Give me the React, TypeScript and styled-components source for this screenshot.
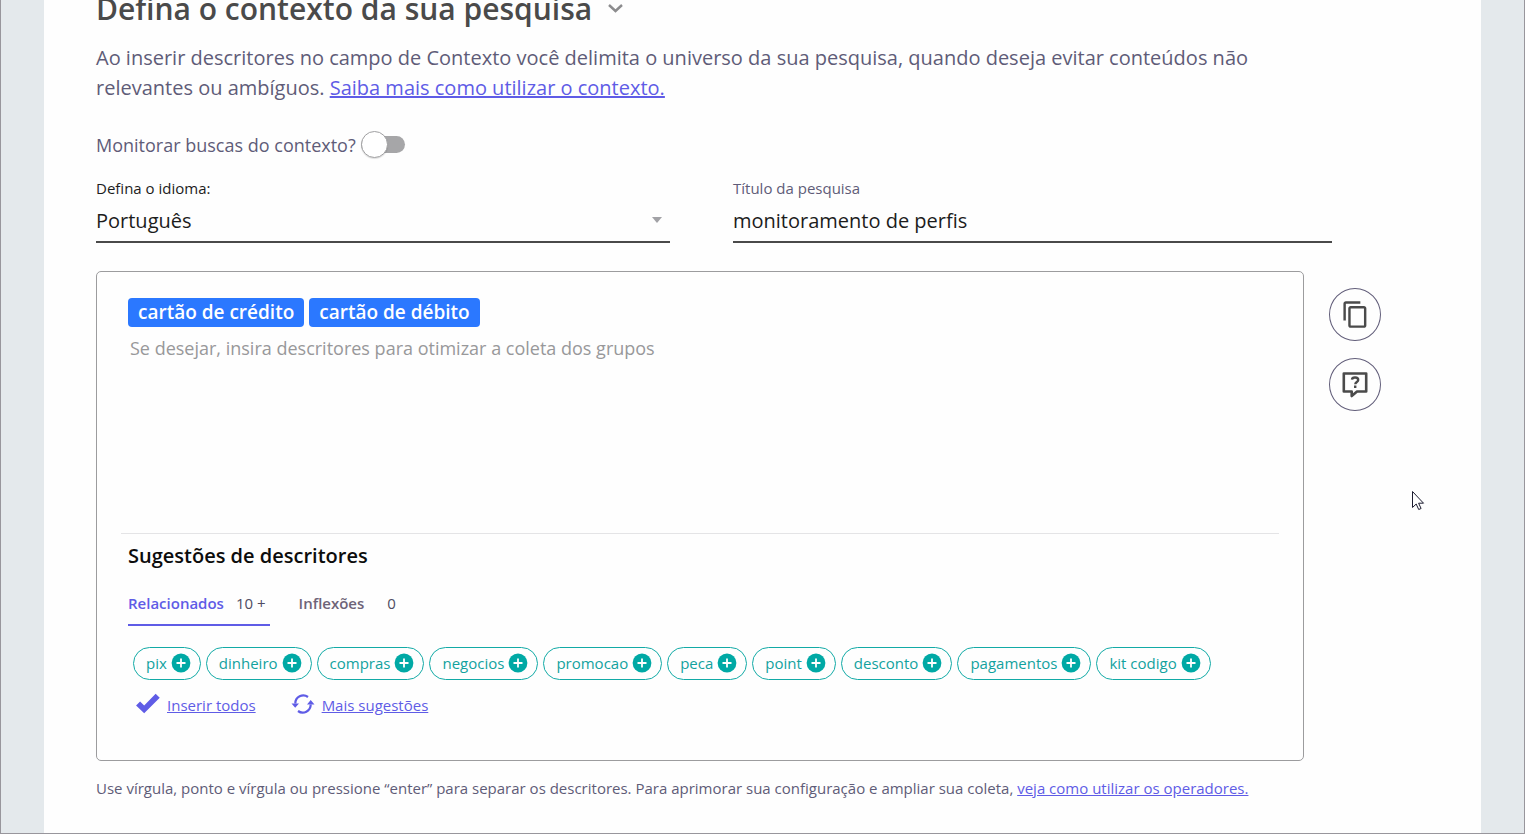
import React, { useState } from 'react';
import styled, { createGlobalStyle } from 'styled-components';

const GlobalStyle = createGlobalStyle`
  * { box-sizing: border-box; }
  body {
    margin: 0;
    font-family: "Open Sans", "Noto Sans", sans-serif;
    font-size: 15px;
    line-height: 20px;
    color: #5f5c78;
    background: #e4e9ec;
  }
  button, input, select { font: inherit; color: inherit; }
`;

const Page = styled.div`
  display: flex;
  min-height: 100vh;
  padding: 0 43px;
  border: 1px solid #98969c;
  border-top: 0;
  background: #e4e9ec;
  overflow: hidden;
`;

const Panel = styled.main`
  display: flex;
  flex-direction: column;
  flex: 1;
  min-width: 0;
  padding: 0 100px 34px 52px;
  background: #fefefe;
`;

const TitleRow = styled.header`
  display: flex;
  align-items: center;
  gap: 16px;
  height: 40px;
  margin-top: -12px;
`;

const Title = styled.h1`
  margin: 0;
  font-size: 30px;
  line-height: 40px;
  padding-top: 2px;
  font-weight: 600;
  color: #4a4a4a;
`;

const IconButton = styled.button`
  display: flex;
  padding: 0;
  border: 0;
  background: none;
`;

const Intro = styled.p`
  max-width: 1180px;
  margin: 15px 0 0;
  font-size: 20px;
  line-height: 30px;
`;

const Link = styled.a`
  color: #5f5ce6;
  text-decoration: underline;
`;

const ToggleRow = styled.label`
  display: flex;
  align-items: center;
  gap: 5px;
  height: 27px;
  margin-top: 28px;
  font-size: 18px;
`;

const Switch = styled.input`
  appearance: none;
  display: flex;
  align-items: center;
  width: 44px;
  height: 17px;
  margin: 0;
  border-radius: 9px;
  background: #a6a6a8;
  &::before {
    content: "";
    flex: none;
    width: 25px;
    height: 25px;
    border: 1px solid #a0a0a2;
    border-radius: 50%;
    background: #fff;
    box-shadow: 0 1px 1px rgba(0, 0, 0, 0.12);
  }
  &:checked { justify-content: flex-end; background: #5f5ce6; }
`;

const Fields = styled.div`
  display: grid;
  grid-template-columns: 574fr 599fr;
  gap: 63px;
  margin: 20px 49px 0 0;
`;

const Field = styled.div`
  display: flex;
  flex-direction: column;
`;

const FieldLabel = styled.label<{ $dark?: boolean }>`
  color: ${(p) => (p.$dark ? '#1c1c1c' : 'inherit')};
`;

const Control = styled.div`
  display: flex;
  align-items: center;
  height: 45px;
  border-bottom: 2px solid #4a4a4a;
  font-size: 20px;
  line-height: 30px;
  color: #1c1c1c;
  svg { flex: none; margin-left: -18px; margin-right: 8px; pointer-events: none; }
`;

const Select = styled.select`
  appearance: none;
  flex: 1;
  height: 100%;
  padding: 2px 0 0;
  border: 0;
  background: none;
`;

const TextInput = styled.input`
  flex: 1;
  min-width: 0;
  height: 100%;
  padding: 2px 0 0;
  border: 0;
  outline: 0;
  background: none;
`;

const Workspace = styled.div`
  display: flex;
  gap: 25px;
  margin-top: 28px;
`;

const Editor = styled.section`
  display: flex;
  flex-direction: column;
  flex: 1;
  min-width: 0;
  min-height: 490px;
  padding: 26px 24px;
  border: 1px solid #9c9c9e;
  border-radius: 5px;
`;

const Entry = styled.div`
  height: 235px;
  padding: 0 7px;
`;

const Tags = styled.div`
  display: flex;
  gap: 5px;
`;

const Tag = styled.span`
  padding: 0 10px;
  border-radius: 4px;
  background: #2b78ff;
  color: #fff;
  font-size: 19px;
  line-height: 29px;
  font-weight: 600;
`;

const DescriptorInput = styled.input`
  width: 100%;
  height: 30px;
  margin-top: 6px;
  padding: 0 2px;
  border: 0;
  outline: 0;
  background: none;
  font-size: 18px;
  &::placeholder { color: #98989a; opacity: 1; }
`;

const Suggestions = styled.div`
  padding: 7px 7px 0;
  border-top: 1px solid #e4e4e6;
`;

const SectionTitle = styled.h2`
  margin: 0;
  font-size: 20px;
  line-height: 30px;
  font-weight: 600;
  color: #0c0c0c;
`;

const Tabs = styled.div`
  display: flex;
  gap: 24px;
  margin-top: 18px;
`;

const Tab = styled.button<{ $active?: boolean }>`
  display: flex;
  gap: ${(p) => (p.$active ? 12 : 23)}px;
  height: 37px;
  padding: 4px 4px 0;
  padding-left: ${(p) => (p.$active ? 0 : 5)}px;
  border: 0;
  border-bottom: 2px solid ${(p) => (p.$active ? '#5f5ce6' : 'transparent')};
  background: none;
  color: ${(p) => (p.$active ? '#5f5ce6' : '#6e6478')};
  font-weight: 600;
`;

const Count = styled.span`
  font-weight: 400;
  color: #4f4c62;
`;

const Chips = styled.div`
  display: flex;
  flex-wrap: wrap;
  gap: 5px;
  margin: 21px 0 0 5px;
`;

const Chip = styled.button`
  display: flex;
  align-items: center;
  gap: 4px;
  height: 33px;
  padding: 0 9px 1px 12px;
  border: 1px solid #12aaa6;
  border-radius: 17px;
  background: none;
  color: #12a29e;
`;

const Actions = styled.div`
  display: flex;
  gap: 35px;
  margin: 10px 0 0 8px;
`;

const Action = styled.a`
  display: flex;
  align-items: center;
  gap: 7px;
  height: 30px;
  color: #5f5ce6;
  svg { flex: none; margin-bottom: 3px; }
`;

const SideActions = styled.div`
  display: flex;
  flex-direction: column;
  gap: 17px;
  padding-top: 17px;
`;

const RoundButton = styled.button`
  display: flex;
  align-items: center;
  justify-content: center;
  width: 52px;
  height: 53px;
  padding: 0;
  border: 1px solid #625e7a;
  border-radius: 50%;
  background: none;
`;

const Hint = styled.p`
  margin: 17px 0 0;
`;

const Pointer = styled.svg`
  position: fixed;
  left: 1412px;
  top: 490px;
  pointer-events: none;
`;

const words = ['pix', 'dinheiro', 'compras', 'negocios', 'promocao', 'peca', 'point', 'desconto', 'pagamentos', 'kit codigo'];

const PlusIcon = () => (
  <svg width="20" height="20" viewBox="0 0 20 20" aria-hidden="true">
    <circle cx="10" cy="10" r="9.4" fill="#00a9a5" />
    <path d="M10 5.500v9M5.500 10h9" stroke="#fff" strokeWidth="1.800" />
  </svg>
);

export default function App() {
  const [monitor, setMonitor] = useState(false);
  const [title, setTitle] = useState('monitoramento de perfis');

  return (
    <>
      <GlobalStyle />
      <Page>
        <Panel>
          <TitleRow>
            <Title>Defina o contexto da sua pesquisa</Title>
            <IconButton type="button" aria-label="Recolher">
              <svg width="15" height="9" viewBox="0 0 15 9">
                <path d="M1 1l6.500 6L14 1" fill="none" stroke="#8c8c8e" strokeWidth="2.400" />
              </svg>
            </IconButton>
          </TitleRow>

          <Intro>
            Ao inserir descritores no campo de Contexto você delimita o universo da sua pesquisa, quando deseja evitar
            conteúdos não relevantes ou ambíguos. <Link href="#contexto">Saiba mais como utilizar o contexto.</Link>
          </Intro>

          <ToggleRow>
            Monitorar buscas do contexto?
            <Switch type="checkbox" checked={monitor} onChange={(e) => setMonitor(e.target.checked)} />
          </ToggleRow>

          <Fields>
            <Field>
              <FieldLabel htmlFor="idioma" $dark>Defina o idioma:</FieldLabel>
              <Control>
                <Select id="idioma" defaultValue="pt">
                  <option value="pt">Português</option>
                </Select>
                <svg width="10" height="6" viewBox="0 0 10 6"><path d="M0 0h10L5 6z" fill="#a2a2a6" /></svg>
              </Control>
            </Field>
            <Field>
              <FieldLabel htmlFor="titulo">Título da pesquisa</FieldLabel>
              <Control>
                <TextInput id="titulo" value={title} onChange={(e) => setTitle(e.target.value)} />
              </Control>
            </Field>
          </Fields>

          <Workspace>
            <Editor>
              <Entry>
                <Tags>
                  <Tag>cartão de crédito</Tag>
                  <Tag>cartão de débito</Tag>
                </Tags>
                <DescriptorInput
                  aria-label="Descritores"
                  placeholder="Se desejar, insira descritores para otimizar a coleta dos grupos"
                />
              </Entry>
              <Suggestions>
                <SectionTitle>Sugestões de descritores</SectionTitle>
                <Tabs>
                  <Tab type="button" $active>Relacionados <Count>10 +</Count></Tab>
                  <Tab type="button">Inflexões <Count>0</Count></Tab>
                </Tabs>
                <Chips>
                  {words.map((word) => (
                    <Chip type="button" key={word}>{word}<PlusIcon /></Chip>
                  ))}
                </Chips>
                <Actions>
                  <Action href="#inserir">
                    <svg width="24" height="21" viewBox="0 0 25 22">
                      <path d="M0 13l4.200-4.200 4.300 4.200L20.500.8l4.300 4.200L8.500 21.200z" fill="#5f5ce6" />
                    </svg>
                    Inserir todos
                  </Action>
                  <Action href="#mais">
                    <svg width="24" height="20" viewBox="0 0 24 20">
                      <path d="M17 3A8 8 0 0 0 4.300 9.500M7 17A8 8 0 0 0 19.700 10.500" fill="none" stroke="#5f5ce6" strokeWidth="2.200" />
                      <path d="M.5 9.500H8L4.200 13.800zM16 10.500h7.500L19.700 6z" fill="#5f5ce6" />
                    </svg>
                    Mais sugestões
                  </Action>
                </Actions>
              </Suggestions>
            </Editor>
            <SideActions>
              <RoundButton type="button" aria-label="Copiar">
                <svg width="29" height="29" viewBox="0 0 24 24" fill="#4a4a4a">
                  <path d="M16 1H4c-1.100 0-2 .9-2 2v14h2V3h12V1zm3 4H8c-1.100 0-2 .9-2 2v14c0 1.100.9 2 2 2h11c1.100 0 2-.9 2-2V7c0-1.100-.9-2-2-2zm0 16H8V7h11v14z" />
                </svg>
              </RoundButton>
              <RoundButton type="button" aria-label="Ajuda">
                <svg width="26" height="28" viewBox="0 0 26 28" fill="none" stroke="#4a4a4a" strokeWidth="2.600">
                  <path d="M1.800 2.500h22.400v18H15l-5.300 4.500v-4.500H1.800z" strokeLinejoin="round" />
                  <path d="M10 8.700c.3-3 6.200-2.800 6.200.3 0 2-2.900 1.900-2.900 4.200M13.200 14.600v2.400" strokeWidth="2.400" />
                </svg>
              </RoundButton>
            </SideActions>
          </Workspace>

          <Hint>
            Use vírgula, ponto e vírgula ou pressione “enter” para separar os descritores. Para aprimorar sua
            configuração e ampliar sua coleta, <Link href="#operadores">veja como utilizar os operadores.</Link>
          </Hint>
        </Panel>
      </Page>
      <Pointer width="13" height="21" viewBox="0 0 13 21" aria-hidden="true">
        <path d="M.5 1.500v16l3.700-3.500 2.500 5.500 2.400-1-2.500-5.300h4.900z" fill="#fff" stroke="#1c1c30" strokeWidth="1" />
      </Pointer>
    </>
  );
}
